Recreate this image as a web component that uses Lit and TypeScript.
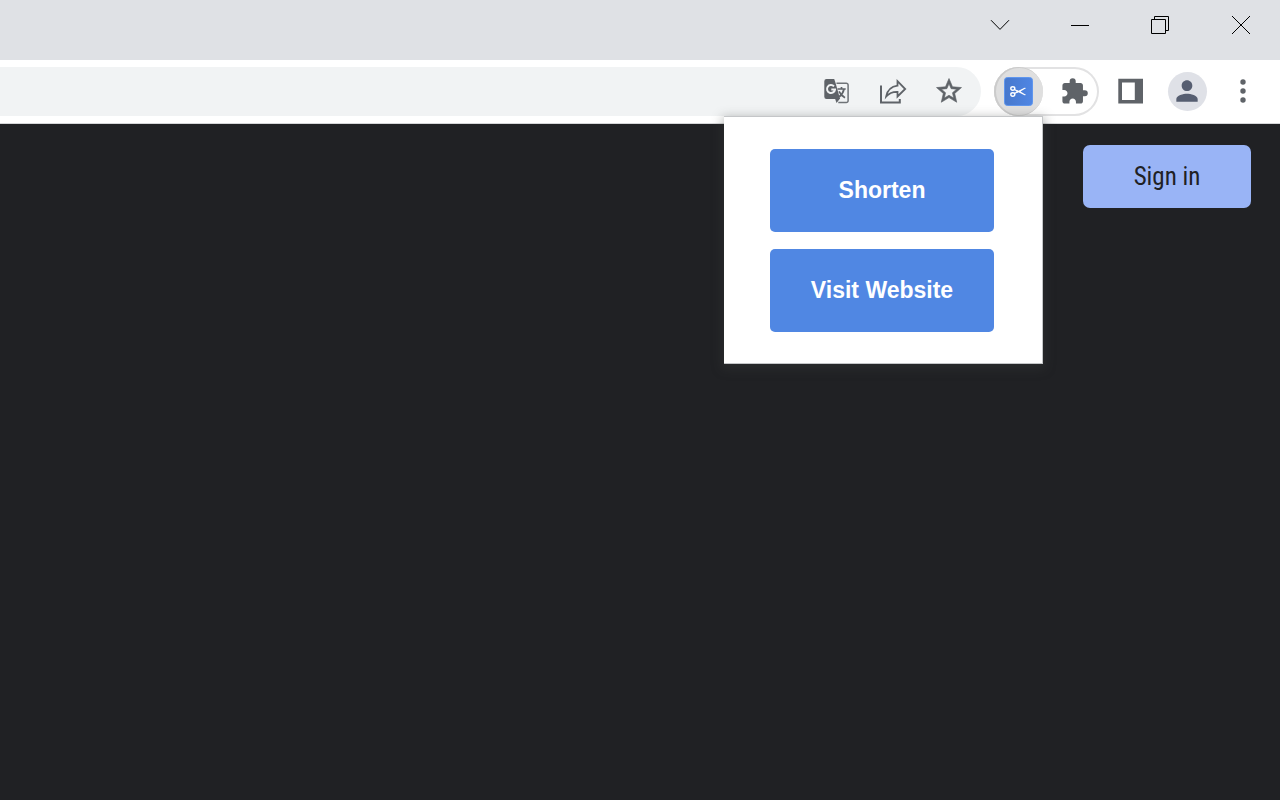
import { LitElement, html, css, svg } from "lit";
import { customElement } from "lit/decorators.js";

const icons = {
  chevron: html`<svg width="20" height="12" viewBox="0 0 20 12" fill="none" stroke="#000" stroke-width="1"><path d="M1 1.2 10 10.4 19 1.2" /></svg>`,
  minimize: html`<svg width="18" height="18" viewBox="0 0 18 18" shape-rendering="crispEdges"><path d="M0 9h18v1H0z" /></svg>`,
  restore: html`<svg width="18" height="18" viewBox="0 0 18 18" fill="none" stroke="#000"><path d="M.5 3.5h14v14H.5zM3.5 3.500V.5h14v14h-3" /></svg>`,
  close: html`<svg width="20" height="20" viewBox="0 0 20 20" fill="none" stroke="#000"><path d="m2 1 18 18M20 1 2 19" /></svg>`,
  translate: html`<svg width="26" height="26" viewBox="0 0 26 26" fill="none">
    <path d="M12.500 5.200H22.300a1.800 1.800 0 0 1 1.800 1.800v15.700a1.800 1.800 0 0 1-1.800 1.800h-8" stroke="#6f7377" stroke-width="1.500" />
    <path d="M2.500 1h7.700l1.300 3.700 4.600 16.300H2.500A2.300 2.300 0 0 1 .300 18.700V3.300A2.300 2.300 0 0 1 2.500 1z" fill="#5f6368" />
    <path d="M11 20.500h5.100l-3.600 4.600z" fill="#5f6368" />
    <path d="M10 8.300a4 4 0 1 0 1 3.200H7.300" stroke="#f1f3f4" stroke-width="2" />
    <path d="M13.500 11h8.200M17.500 9v2M20 11.200c-.8 3.500-2.800 6-5 7.800M15 13.300c1.200 2.500 3.200 4.700 6 6.400" stroke="#5f6368" stroke-width="1.700" />
  </svg>`,
  share: html`<svg width="28" height="28" viewBox="0 0 28 28" fill="none" stroke="#5f6368" stroke-width="2">
    <path d="M2 8.500v17H20.800V22" />
    <path d="M18.500 4.200 26.200 12l-7.700 7.500v-4.600c-4.900-.2-8.600 1.600-11.300 4.600C8.300 13.600 12 9.600 18.500 8.700z" stroke-width="1.800" />
  </svg>`,
  star: html`<svg width="30" height="30" viewBox="0 0 24 24" fill="#5f6368" stroke="#5f6368" stroke-width=".5"><path d="m22 9.240-7.190-.620L12 2 9.190 8.630 2 9.240l5.460 4.730L5.820 21 12 17.270 18.180 21l-1.630-7.030zM12 15.400l-3.760 2.270 1-4.280-3.320-2.880 4.380-.380L12 6.100l1.710 4.040 4.380.380-3.320 2.880 1 4.280z" /></svg>`,
  scissors: html`<svg width="29" height="29" viewBox="0 0 29 29" fill="none">
    <defs><linearGradient id="tile" x1="0" x2="1" y1="0" y2="0"><stop offset="0" stop-color="#4778cc" /><stop offset="1" stop-color="#4f86e4" /></linearGradient></defs>
    <rect x=".5" y=".5" width="28" height="28" rx="3" fill="url(#tile)" stroke="#5f96ee" />
    <g stroke="#fff" stroke-width="1.400">
      <ellipse cx="8.800" cy="11.500" rx="2" ry="1.700" />
      <ellipse cx="8.800" cy="17.500" rx="2" ry="1.700" />
      <path d="m10.500 12.500 3.500 2M10.500 16.500l3.500-2" />
    </g>
    <path d="m12.500 13 2 .7 6-2.900 1.700.2-5.700 3.500 5.700 3.500-1.700.2-6-2.900-2 .7z" fill="#fff" />
  </svg>`,
  puzzle: html`<svg width="29" height="29" viewBox="0 0 24 24" fill="#5f6368"><path d="M20.500 11H19V7c0-1.100-.9-2-2-2h-4V3.500a2.500 2.500 0 0 0-5 0V5H4c-1.100 0-1.990.9-1.990 2v3.800H3.500c1.490 0 2.700 1.210 2.700 2.700s-1.210 2.700-2.700 2.700H2V20c0 1.100.9 2 2 2h3.800v-1.500c0-1.490 1.210-2.700 2.700-2.700s2.700 1.210 2.700 2.700V22H17c1.100 0 2-.9 2-2v-4h1.500a2.500 2.500 0 0 0 0-5z" /></svg>`,
  panel: html`<svg width="26" height="26" viewBox="0 0 26 26"><path fill="#5f6368" fill-rule="evenodd" d="M.300.800H25v24.700H.300zM4 4.500v17.500h12.800V4.500z" /></svg>`,
  person: html`<svg width="32" height="32" viewBox="0 0 24 24" fill="#565e71"><path d="M12 12c2.210 0 4-1.790 4-4s-1.790-4-4-4-4 1.790-4 4 1.790 4 4 4zm0 2c-2.670 0-8 1.340-8 4v2h16v-2c0-2.660-5.330-4-8-4z" /></svg>`,
  menu: html`<svg width="6" height="24" viewBox="0 0 6 24" fill="#5f6368">${[3, 12, 21].map((y) => svg`<circle cx="3" cy=${y} r="2.700" />`)}</svg>`,
};

@customElement("extension-popup")
export class ExtensionPopup extends LitElement {
  static styles = css`
    :host {
      display: flex;
      flex-direction: column;
      gap: 17px;
      box-sizing: border-box;
      width: 319px;
      padding: 32px 48px 31px 46px;
      border: solid #c4c6c8;
      border-width: 1px 1px 1px 0;
      background: #fff;
      box-shadow: 0 3px 10px 2px rgba(60, 64, 60, 0.35);
    }
    .action {
      height: 83px;
      padding: 0;
      border: 0;
      border-radius: 5px;
      background: #5087e3;
      color: #fff;
      font: bold 23px/27px "Liberation Sans", Arial, sans-serif;
      cursor: pointer;
    }
  `;
  render() {
    return html`
      <button class="action">Shorten</button>
      <button class="action">Visit Website</button>
    `;
  }
}

@customElement("app-root")
export class AppRoot extends LitElement {
  static styles = css`
    :host {
      display: flex;
      flex-direction: column;
      min-height: 100vh;
      background: #202124;
      font-family: Roboto, sans-serif;
    }
    button {
      padding: 0;
      border: 0;
      background: none;
      cursor: pointer;
    }
    svg {
      display: block;
      flex: none;
    }
    .titlebar {
      display: flex;
      justify-content: flex-end;
      height: 60px;
      background: #dfe1e5;
    }
    .window-button {
      display: grid;
      place-items: center;
      width: 80px;
      height: 50px;
    }
    .toolbar {
      display: flex;
      align-items: center;
      box-sizing: border-box;
      height: 64px;
      padding: 0 9px 1px 0;
      border-bottom: 1px solid #d5d6d8;
      background: #fff;
    }
    .address-bar {
      display: flex;
      flex: 1;
      height: 49px;
      margin-right: 13px;
      padding-right: 4px;
      border-radius: 0 25px 25px 0;
      background: #f1f3f4;
    }
    .address {
      flex: 1;
      min-width: 0;
      padding: 0 24px;
      border: 0;
      outline: 0;
      background: none;
      color: #202124;
      font: 22px/26px Roboto, sans-serif;
    }
    .icon-button {
      display: grid;
      place-items: center;
      width: 56px;
      height: 49px;
    }
    .extensions {
      display: flex;
      width: 105px;
      height: 49px;
      margin-right: 4px;
      border-radius: 25px;
      box-shadow: inset 0 0 0 2px #e2e2e3;
    }
    .anchor {
      position: relative;
    }
    .active {
      display: grid;
      place-items: center;
      width: 49px;
      height: 49px;
      border-radius: 50%;
      background: #dfdfdf;
      box-shadow: inset 1px 0 0 1px #cbcbcb;
    }
    .puzzle {
      flex: 1;
      display: grid;
      place-items: center;
      padding-left: 7px;
    }
    .popup {
      position: absolute;
      z-index: 1;
      top: 49px;
      right: 0;
    }
    .avatar {
      display: grid;
      place-items: center;
      width: 39px;
      height: 39px;
      border-radius: 50%;
      background: #dfe1e7;
    }
    .page {
      display: flex;
      flex: 1;
      align-items: flex-start;
      justify-content: flex-end;
      padding: 21px 29px;
    }
    .sign-in {
      width: 168px;
      height: 63px;
      border-radius: 7px;
      background: #99b4f6;
      color: #202124;
      font: 25px/30px "Roboto Condensed", "Liberation Sans Narrow", Roboto, sans-serif;
    }
  `;

  render() {
    return html`
      <header>
        <div class="titlebar">
          <button class="window-button" aria-label="Search tabs">${icons.chevron}</button>
          <button class="window-button" aria-label="Minimize">${icons.minimize}</button>
          <button class="window-button" aria-label="Restore">${icons.restore}</button>
          <button class="window-button" aria-label="Close">${icons.close}</button>
        </div>
        <div class="toolbar">
          <div class="address-bar">
            <input class="address" type="text" aria-label="Address" />
            <button class="icon-button" aria-label="Translate">${icons.translate}</button>
            <button class="icon-button" aria-label="Share">${icons.share}</button>
            <button class="icon-button" aria-label="Bookmark">${icons.star}</button>
          </div>
          <div class="extensions">
            <div class="anchor">
              <button class="active" aria-label="Link shortener">${icons.scissors}</button>
              <extension-popup class="popup"></extension-popup>
            </div>
            <button class="puzzle" aria-label="Extensions">${icons.puzzle}</button>
          </div>
          <button class="icon-button" aria-label="Side panel">${icons.panel}</button>
          <button class="icon-button" aria-label="Profile"><span class="avatar">${icons.person}</span></button>
          <button class="icon-button" aria-label="Menu">${icons.menu}</button>
        </div>
      </header>
      <main class="page">
        <button class="sign-in">Sign in</button>
      </main>
    `;
  }
}
